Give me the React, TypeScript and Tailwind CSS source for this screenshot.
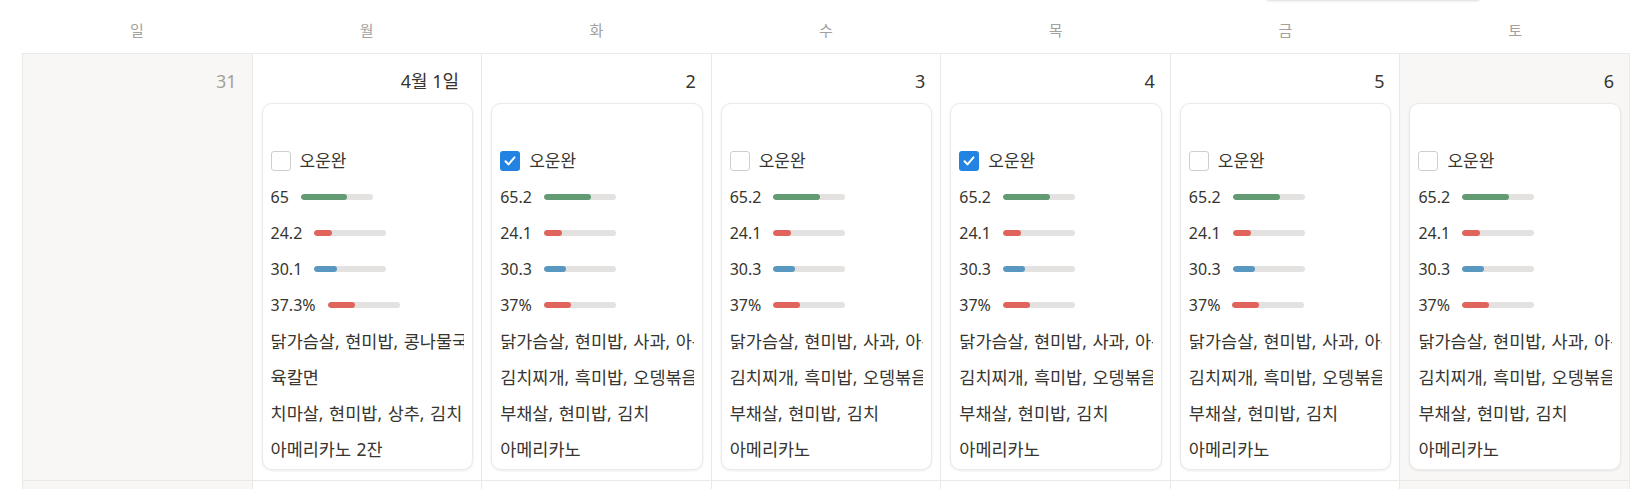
import React from "react";

type Day = {
  label: string;
  muted?: boolean;
  weekend?: boolean;
  wide?: boolean;
  entry?: {
    done: boolean;
    weight: string;
    fat: string;
    muscle: string;
    ratio: string;
    bars: [number, number, number, number];
    meals: string[];
  };
};

const sameMeals = [
  "닭가슴살, 현미밥, 사과, 아몬드",
  "김치찌개, 흑미밥, 오뎅볶음",
  "부채살, 현미밥, 김치",
  "아메리카노",
];

const rest = (done: boolean) => ({
  done,
  weight: "65.2",
  fat: "24.1",
  muscle: "30.3",
  ratio: "37%",
  bars: [47, 18, 22, 27] as [number, number, number, number],
  meals: sameMeals,
});

const week: Day[] = [
  { label: "31", muted: true, weekend: true },
  {
    label: "4월 1일",
    wide: true,
    entry: {
      done: false,
      weight: "65",
      fat: "24.2",
      muscle: "30.1",
      ratio: "37.3%",
      bars: [46, 18, 23, 27],
      meals: ["닭가슴살, 현미밥, 콩나물국밥", "육칼면", "치마살, 현미밥, 상추, 김치", "아메리카노 2잔"],
    },
  },
  { label: "2", entry: rest(true) },
  { label: "3", entry: rest(false) },
  { label: "4", entry: rest(true) },
  { label: "5", entry: rest(false) },
  { label: "6", weekend: true, entry: rest(false) },
];

const weekdays = ["일", "월", "화", "수", "목", "금", "토"];

const Checkbox = ({ checked }: { checked: boolean }) =>
  checked ? (
    <span className="flex h-[20px] w-[20px] shrink-0 items-center justify-center rounded-[3px] bg-[#2383e2]">
      <svg width="14" height="14" viewBox="0 0 14 14" fill="none">
        <path d="M2.5 7.2l3 3.2 6-7" stroke="white" strokeWidth="2" strokeLinecap="round" strokeLinejoin="round" />
      </svg>
    </span>
  ) : (
    <span className="h-[20px] w-[20px] shrink-0 rounded-[3px] border-[1.5px] border-[#cfcecb] bg-white" />
  );

const Bar = ({ value, color }: { value: number; color: string }) => (
  <span className="ml-[12px] h-[6px] w-[72px] shrink-0 overflow-hidden rounded-full bg-[#e3e2e0]">
    <span className={`block h-full rounded-full ${color}`} style={{ width: `${value}px` }} />
  </span>
);

const Row = ({ children }: { children?: React.ReactNode }) => (
  <div className="flex h-[36px] items-center overflow-hidden whitespace-nowrap">{children}</div>
);

const Card = ({ entry }: { entry: NonNullable<Day["entry"]> }) => (
  <div className="ml-[9px] mr-[8px] mt-[9px] flex flex-col rounded-[10px] border border-[#ebeae8] bg-white px-[8px] pb-[2px] pt-[3px] text-[17.5px] [word-spacing:1px] shadow-[0_1px_3px_rgba(15,15,15,0.08)]">
    <Row />
    <Row>
      <Checkbox checked={entry.done} />
      <span className="ml-[9px] text-[17px]">오운완</span>
    </Row>
    <Row>
      <span className="text-[16px]">{entry.weight}</span>
      <Bar value={entry.bars[0]} color="bg-[#619a73]" />
    </Row>
    <Row>
      <span className="text-[16px]">{entry.fat}</span>
      <Bar value={entry.bars[1]} color="bg-[#e0645b]" />
    </Row>
    <Row>
      <span className="text-[16px]">{entry.muscle}</span>
      <Bar value={entry.bars[2]} color="bg-[#5897c0]" />
    </Row>
    <Row>
      <span className="text-[16px]">{entry.ratio}</span>
      <Bar value={entry.bars[3]} color="bg-[#e0645b]" />
    </Row>
    {entry.meals.map((m, i) => (
      <Row key={i}>{m}</Row>
    ))}
  </div>
);

const App = () => {
  return (
    <div className="relative min-h-screen bg-white px-[22px] font-['Noto_Sans','Noto_Sans_CJK_KR',sans-serif] text-[16px] text-[#37352f]">
      <div className="absolute left-[1264px] top-[-20px] h-[21px] w-[218px] rounded-b-[6px] border border-[#e6e5e3] bg-white shadow-[0_1px_2px_rgba(15,15,15,0.06)]" />

      <div className="grid h-[53px] grid-cols-7">
        {weekdays.map((d) => (
          <div key={d} className="flex items-center justify-center pt-[7px] text-[15px] text-[#a3a19c]">
            {d}
          </div>
        ))}
      </div>

      <div className="border-l border-t border-[#e9e9e7]">
        <div className="grid grid-cols-7">
          {week.map((day) => (
            <div
              key={day.label}
              className={`flex h-[427px] flex-col border-b border-r border-[#e9e9e7] pb-[10px] pt-[14px] ${
                day.weekend ? "bg-[#f8f7f5]" : "bg-white"
              }`}
            >
              <div
                className={`h-[26px] text-right text-[18px] leading-[26px] ${day.wide ? "pr-[22px]" : "pr-[15px]"} ${
                  day.muted ? "text-[#a3a19c]" : "text-[#37352f]"
                }`}
              >
                {day.label}
              </div>
              {day.entry && <Card entry={day.entry} />}
            </div>
          ))}
        </div>
        <div className="grid grid-cols-7">
          {weekdays.map((d, i) => (
            <div
              key={d}
              className={`h-[60px] border-r border-[#e9e9e7] ${i === 0 || i === 6 ? "bg-[#f8f7f5]" : "bg-white"}`}
            />
          ))}
        </div>
      </div>
    </div>
  );
};

export default App;
